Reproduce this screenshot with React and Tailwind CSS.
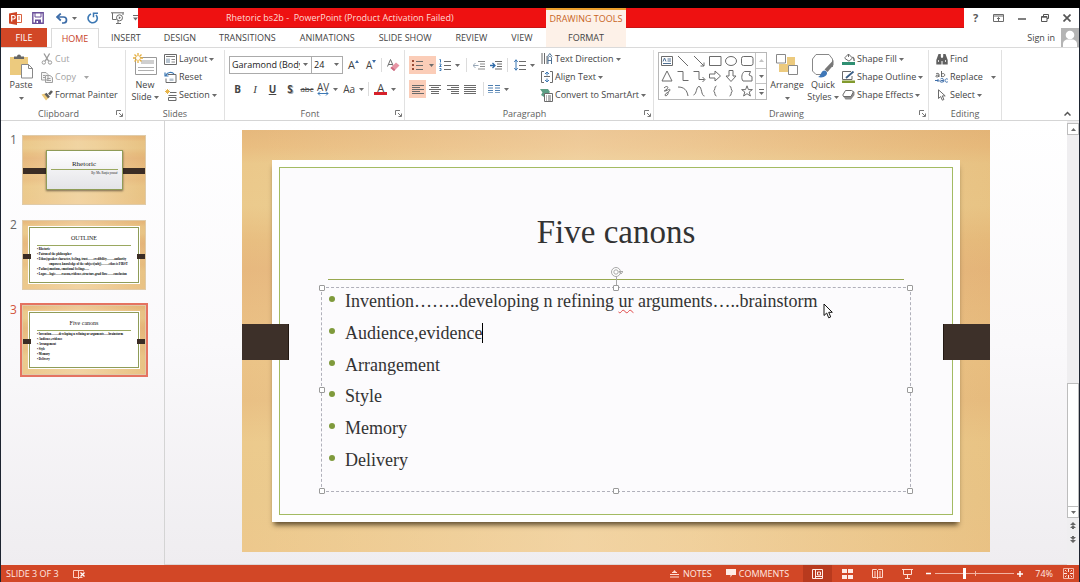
import React from "react";

const WOOD =
  "bg-[linear-gradient(90deg,rgba(255,255,255,0)_0%,rgba(255,240,220,0.28)_45%,rgba(255,240,220,0.2)_60%,rgba(214,160,90,0.16)_100%),linear-gradient(180deg,#e6b87c_0%,#e9bd80_4%,#ebc88a_8%,#ebca8c_18%,#e8be80_26%,#e7b87e_33%,#e9bd82_42%,#ebc386_55%,#e9c084_64%,#ecca8c_74%,#ebc98c_88%,#edc88c_100%)]";

function Icon({ w, h, children, className = "" }) {
  return (
    <svg
      width={w}
      height={h}
      viewBox={`0 0 ${w} ${h}`}
      fill="none"
      stroke="#6b6b6b"
      aria-hidden="true"
      className={`block shrink-0 ${className}`}
    >
      {children}
    </svg>
  );
}

function Caret({ className = "" }) {
  return (
    <svg width="5" height="3" viewBox="0 0 5 3" aria-hidden="true" className={`block shrink-0 fill-[#6b6b6b] ${className}`}>
      <path d="M0 0h5L2.5 3z" />
    </svg>
  );
}

function Row({ icon, label, caret, muted, caretGap = "ml-0.5" }) {
  return (
    <button
      type="button"
      className={`flex h-[18px] items-center whitespace-nowrap ${muted ? "text-[#a3a3a3]" : "text-[#444]"}`}
    >
      <span className="mr-0.5 flex w-[13px] shrink-0 justify-center">{icon}</span>
      {label}
      {caret && <Caret className={caretGap} />}
    </button>
  );
}

function Tool({ label, className = "", children }) {
  return (
    <button type="button" aria-label={label} className={`flex h-[18px] shrink-0 items-center justify-center ${className}`}>
      {children}
    </button>
  );
}

function Group({ title, className = "", launcher, children }) {
  return (
    <section aria-label={title} className={`flex shrink-0 flex-col border-r border-[#e1e1e1] ${className}`}>
      <div className="flex h-[57px] shrink-0 items-start">{children}</div>
      <div className="flex h-[13px] items-center">
        <span className="flex-1 text-center text-[#5e5e5e]">{title}</span>
        {launcher && (
          <button type="button" aria-label={`${title} settings`} className="mr-0.5">
            <Icon w={7} h={7}>
              <path d="M.5 5V.5H5M3 3l3 3M6.5 3.5v3h-3" stroke="#777" />
            </Icon>
          </button>
        )}
      </div>
    </section>
  );
}

const VRule = ({ className = "" }) => <span className={`h-[14px] w-px shrink-0 bg-[#dcdcdc] ${className}`} />;

/* ---------- ribbon icons ---------- */
const CutIcon = (
  <Icon w={12} h={12} >
    <g stroke="#9a9a9a">
      <path d="M3 .5l4.6 7.6M8.6.5L4.2 8.1" strokeWidth="1.3" />
      <circle cx="2.8" cy="9.5" r="1.7" />
      <circle cx="9" cy="9.5" r="1.7" />
    </g>
  </Icon>
);
const CopyIcon = (
  <Icon w={12} h={11}>
    <g stroke="#a0a0a0" fill="#f4f4f4">
      <path d="M.5.5h4.5l2 2v5.500h-6.500zM4.500 3.500h4.500l2.500 2v5h-7z" />
      <path d="M2 3.500h2M2 5.500h2M6 6.500h3.500M6 8.500h4" />
    </g>
  </Icon>
);
const PainterIcon = (
  <Icon w={12} h={11}>
    <path d="M.5 4.500L4 3.500l4 4-3 3z" fill="#ecc878" stroke="none" />
    <path d="M4.500 3.500l3.500 4M8 4.500L11 1" stroke="#5d5d5d" strokeWidth="2.600" />
  </Icon>
);
const LayoutIcon = (
  <Icon w={13} h={11}>
    <path d="M.5.5h12v10H.5z" fill="#fff" />
    <path d="M2 2.500h9" stroke="#777" />
    <path d="M2 4.500h4v4.500H2z" fill="#b7c4d0" stroke="none" />
    <path d="M7.500 5.500h3.500M7.500 8h3.500" stroke="#8a8a8a" />
  </Icon>
);
const ResetIcon = (
  <Icon w={13} h={12}>
    <path d="M3.500 3.500h8.500v8h-10v-4" fill="#fff" />
    <path d="M5.500 7.500h4v2.500h-4z" fill="#b7c4d0" stroke="none" />
    <path d="M2 4.500C3 1 8 .5 10 3M1 1.500v3.500h3.500" stroke="#3c78b4" strokeWidth="1.200" />
  </Icon>
);
const SectionIcon = (
  <Icon w={13} h={12}>
    <path d="M3.500 0v5M1 2.500h5M1.800.8l3.400 3.400M5.200.8L1.800 4.200" stroke="#e8b64c" />
    <path d="M6 3.500h6.500M4.500 6.500h8M4.500 8.500h7.500v3h-7.500z" />
  </Icon>
);
const TextDirIcon = (
  <Icon w={12} h={12}>
    <path d="M1 0v11M3.500 0v11M6 3v8" />
    <path d="M7 11V5c0-2 3.500-2 3.500 0v6M7 7.500h3.500" stroke="#4f7396" />
    <path d="M6.500 3.500l2.300-3 2.300 3" stroke="#4f7396" />
  </Icon>
);
const AlignTextIcon = (
  <Icon w={12} h={12}>
    <path d="M3 .5H.5v11H3M9 .5h2.500v11H9" />
    <path d="M6 1v3.500M4 3l2-2 2 2M6 11V7.500M4 9l2 2 2-2" stroke="#3c78b4" />
    <path d="M3 5.500h6" />
  </Icon>
);
const SmartArtIcon = (
  <Icon w={13} h={13}>
    <path d="M0 0h8l2 3-2 2H4v3L1 6l1.500-2.500z" fill="#5c9e84" stroke="none" />
    <path d="M4.500 4.500h8v8h-8z" fill="#fff" />
    <path d="M6 7h1M8 7h3M6 9h1M8 9h3M6 11h1M8 11h3" />
  </Icon>
);
const FillIcon = (
  <Icon w={13} h={12}>
    <path d="M3 4.500L6.500 1l4 4L7 8.200 3 5.500zM6.500 1V4" fill="#fff" />
    <path d="M10.500 4c1.500 1 1.800 2.500 1.500 4" strokeWidth="1.400" />
    <path d="M0 9h13v3H0z" fill="#2f8f72" stroke="none" />
  </Icon>
);
const OutlineIcon = (
  <Icon w={13} h={12}>
    <path d="M9 .5H.5v8h9.500V5" fill="#fff" />
    <path d="M4 7l7.500-6.500" stroke="#3b5f86" strokeWidth="1.800" />
    <path d="M0 9.500h13V12H0z" fill="#829a2e" stroke="none" />
  </Icon>
);
const EffectsIcon = (
  <Icon w={13} h={10}>
    <path d="M1 6l2.500 3.500h5.500L12.500 5V2L9 .5z" fill="#8d8d8d" stroke="none" />
    <path d="M3.500.5h6l2 1.200-2.500 4.800H1.500L.8 5z" fill="#fff" />
  </Icon>
);
const FindIcon = (
  <Icon w={12} h={11}>
    <path d="M2.500 0h2.300v2.500L5.500 4v6.500H.3V6zM9.500 0H7.200v2.500L6.500 4v6.500h5.200V6z" fill="#606060" stroke="none" />
    <path d="M5 4h2v3H5z" fill="#606060" stroke="none" />
    <path d="M2.500 6v2M9.500 6v2" stroke="#ddd" />
  </Icon>
);
const ReplaceIcon = (
  <Icon w={13} h={12}>
    <path d="M1 3c1-1 3-.8 3 .5V6M4 4.200C2 4 .8 4.500.8 5.300S3 6.200 4 5.200M6.500 0v6M6.500 4c0-2 3.200-2 3.200 0s-3.200 2-3.200.3" stroke="#666" />
    <path d="M5.500 8c1-1 2.800-.8 2.800.5V11.200M8.300 9.500c-2-.2-3.200.2-3.200 1s2.200 1 3.200 0M12.800 8.200c-1.500-1-2.800 0-2.800 1.300s1.300 2.300 2.800 1.300" stroke="#3c6ca8" />
    <path d="M0 9.500h3.500M2.500 8L4 9.500 2.500 11" stroke="#3c6ca8" />
  </Icon>
);
const SelectIcon = (
  <Icon w={9} h={12}>
    <path d="M1.500.8v8.700l2.200-2 1.600 3.700 1.600-.7-1.600-3.600h2.900z" fill="#fff" />
  </Icon>
);

function Lines({ xs, color = "#6b6b6b" }) {
  return (
    <Icon w={12} h={9}>
      {xs.map(([a, b], i) => (
        <path key={i} d={`M${a} ${i * 2 + 0.5}H${b}`} stroke={color} />
      ))}
    </Icon>
  );
}

/* ---------- title bar and tabs ---------- */
function TitleBar() {
  return (
    <header className="flex h-5 shrink-0 items-stretch bg-white">
      <div className="flex w-[137px] shrink-0 items-center pl-2">
        <Icon w={13} h={13}>
          <path d="M0 1.500L8 0v13L0 11.500z" fill="#cf4526" stroke="none" />
          <path d="M2.700 9.500v-6h1.800a1.600 1.600 0 010 3.500H2.700" stroke="#fff" strokeWidth="1.200" />
          <path d="M8 2.500h4.500v8H8M9 5h2M9 7h2" stroke="#d9603f" />
        </Icon>
        <Tool label="Save" className="ml-2.5">
          <Icon w={12} h={12}>
            <path d="M.8.8h10.400v10.400H.8z" stroke="#6a4f9a" strokeWidth="1.400" />
            <path d="M3 1v4h6V1" stroke="#6a4f9a" />
            <path d="M3 7.500h6V12H3z" fill="#6a4f9a" stroke="none" />
            <path d="M4.500 9h1.500v2H4.500z" fill="#fff" stroke="none" />
          </Icon>
        </Tool>
        <Tool label="Undo" className="ml-3">
          <Icon w={12} h={11}>
            <path d="M1.500 4h6c4 0 4 6 0 6H6" stroke="#3c6ca8" strokeWidth="1.700" />
            <path d="M4.800.5L1 4l3.800 3.500" stroke="#3c6ca8" strokeWidth="1.700" />
          </Icon>
          <Caret className="ml-1" />
        </Tool>
        <Tool label="Repeat" className="ml-2.5">
          <Icon w={12} h={12}>
            <path d="M9 3A4.600 4.600 0 1 1 4 1.900" stroke="#3c78b4" strokeWidth="1.600" />
            <path d="M6.500 5.200V1.200h4.500" stroke="#3c78b4" strokeWidth="1.500" />
          </Icon>
        </Tool>
        <Tool label="Start from beginning" className="ml-3">
          <Icon w={14} h={12}>
            <path d="M0 .8h13M1.500 1v6.500h4M12 1v2M5 11.500h5M7 8v3" />
            <circle cx="8.500" cy="5.800" r="3" fill="#fff" />
            <path d="M7.800 4.300l2.200 1.500-2.200 1.500z" fill="#6b6b6b" stroke="none" />
          </Icon>
        </Tool>
        <Tool label="Customize toolbar" className="ml-2">
          <Icon w={5} h={6}>
            <path d="M0 .5h5" />
            <path d="M0 2.500h5L2.500 5.500z" fill="#6b6b6b" stroke="none" />
          </Icon>
        </Tool>
      </div>
      <div className="flex flex-1 border-b border-[#c81414] bg-[#ee1111]">
        <h1 className="flex w-[408px] items-center whitespace-pre pl-[88px] text-[#ffdcd6]">
          Rhetoric bs2b -&nbsp; PowerPoint (Product Activation Failed)
        </h1>
        <div className="-mb-px flex w-20 items-center justify-center whitespace-nowrap border-t-2 border-[#eca02c] bg-[#fdf1e8] text-[#c8641e]">
          DRAWING TOOLS
        </div>
      </div>
      <div className="flex w-[115px] shrink-0 items-center justify-between pr-2 pl-[9px]">
        <button type="button" aria-label="Help" className="text-[11px] font-bold text-[#5a5a5a]">?</button>
        <button type="button" aria-label="Ribbon display options">
          <Icon w={11} h={8}>
            <path d="M.5.5h10v7H.5zM.5 2h10M5.500 7V3.500M4 5l1.500-1.500L7 5" />
          </Icon>
        </button>
        <button type="button" aria-label="Minimize">
          <Icon w={8} h={8}><path d="M0 5h8" stroke="#555" strokeWidth="1.500" /></Icon>
        </button>
        <button type="button" aria-label="Restore">
          <Icon w={8} h={8}><path d="M2.500 2V.5h5v4H6M.5 2.500H6v5H.5zM.5 3.200H6" stroke="#555" /></Icon>
        </button>
        <button type="button" aria-label="Close">
          <Icon w={8} h={8}><path d="M.5.5l7 7M7.500.5l-7 7" stroke="#555" strokeWidth="1.700" /></Icon>
        </button>
      </div>
    </header>
  );
}

const TABS = [
  ["INSERT", "ml-3"],
  ["DESIGN", "ml-[23px]"],
  ["TRANSITIONS", "ml-[23px]"],
  ["ANIMATIONS", "ml-6"],
  ["SLIDE SHOW", "ml-6"],
  ["REVIEW", "ml-6"],
  ["VIEW", "ml-6"],
];

function Tabs() {
  return (
    <nav className="flex h-5 shrink-0 items-stretch border-b border-[#dadada] bg-white">
      <button type="button" className="mr-1 w-[46px] bg-[#d24726] text-white">FILE</button>
      <button type="button" className="-mb-px w-12 border border-b-0 border-[#dadada] bg-white text-[#c8432a]">HOME</button>
      <div className="flex w-[447px] whitespace-nowrap">
        {TABS.map(([t, gap]) => (
          <button key={t} type="button" className={gap}>{t}</button>
        ))}
      </div>
      <button type="button" className="w-20 bg-[#fdf1e8]">FORMAT</button>
      <div className="ml-auto flex items-center gap-[6px]">
        <a href="#signin">Sign in</a>
        <svg width="18" height="19" viewBox="0 0 18 19" role="img" aria-label="Account picture" className="block">
          <path d="M0 0h18v19H0z" fill="#b4b4b4" />
          <circle cx="9" cy="7" r="4.300" fill="#fff" />
          <path d="M2 19v-3c0-3 2.500-4.500 4.500-4.500h5c2 0 4.500 1.500 4.500 4.500v3z" fill="#fff" />
        </svg>
      </div>
    </nav>
  );
}

/* ---------- shape gallery ---------- */
const SHAPES = [
  ["Text box", <><path d="M.5 1.500h11v9H.5z" /><path d="M2 6.500l1.500-3.500L5 6.500M6.500 4H10M6.500 6H10M2 8.500h8" stroke="#4f6f92" /></>],
  ["Line", <path d="M1 1l10 10" />],
  ["Arrow", <><path d="M1 1l10 10" /><path d="M11 7.500V11H7.500" /></>],
  ["Rectangle", <path d="M.5 1.500h11.500v9H.5z" />],
  ["Oval", <ellipse cx="6" cy="6" rx="5.500" ry="4.500" />],
  ["Rounded rectangle", <rect x=".5" y="1.500" width="11.500" height="9" rx="2" />],
  ["Triangle", <path d="M6 1l5 10H1z" />],
  ["Elbow connector", <path d="M.5 1.500h5.500v9h5.500" />],
  ["Elbow arrow", <><path d="M.5 1.500h5.500v8h5.500" /><path d="M9.500 7l2.500 2.500L9.500 12" /></>],
  ["Right arrow", <path d="M.5 4h5.500V1l5.500 5L6 11V8H.5z" />],
  ["Down arrow", <path d="M4 .5v5.500H1l5 5.500L11 6H8V.5z" />],
  ["Freeform", <path d="M3.500 1.500h6L8 5l3 1.500v4.500H2c-2-2-1.500-8 1.500-9.500z" />],
  ["Scribble", <path d="M3 3c3-3 5-1 3 1S2 6 4 6s5-3 5-1-5 3-5 5 4 0 3-3" />],
  ["Arc", <path d="M1 2c6 0 9 3 10 9" />],
  ["Curve", <path d="M.5 10C4 9 3 1.500 6 1.500S8 11 11.500 11" />],
  ["Left brace", <path d="M7.500 1C5 1 6.500 6 4.500 6c2 0 .5 5 3 5" />],
  ["Right brace", <path d="M4.500 1c2.500 0 1 5 3 5-2 0-.5 5-3 5" />],
  ["Star", <path d="M6 .8l1.400 3.800h4L8.200 7l1.200 4L6 8.700 2.600 11l1.200-4L.6 4.600h4z" />],
];

function Ribbon() {
  return (
    <div className="flex h-[73px] shrink-0 border-b border-[#d5d5d5] bg-white pt-[2px] text-[#444]">
      <Group title="Clipboard" launcher className="w-[125px]">
        <button type="button" className="ml-2 flex w-6 flex-col items-center pt-1">
          <Icon w={24} h={25}>
            <path d="M1 3h18v18H1z" fill="#ecca7e" stroke="none" />
            <path d="M5 5V2.500h3a2 2 0 014 0h3V5z" fill="#666" stroke="none" />
            <path d="M12.500 10.500h7l4 4v9.500h-11z" fill="#fff" stroke="#888" />
            <path d="M19.500 10.500v4h4" stroke="#888" />
          </Icon>
          <span className="leading-3">Paste</span>
          <Caret className="mt-1.5" />
        </button>
        <div className="ml-[7px]">
          <Row icon={CutIcon} label="Cut" muted />
          <Row icon={CopyIcon} label="Copy" muted caret caretGap="ml-2 opacity-60" />
          <Row icon={PainterIcon} label="Format Painter" />
        </div>
      </Group>

      <Group title="Slides" className="w-[99px]">
        <button type="button" className="ml-[5px] flex w-7 flex-col items-center pt-[3px]">
          <Icon w={24} h={22}>
            <path d="M2.500 4.500h21v17h-21z" fill="#fff" stroke="#999" />
            <path d="M8 7h13v4H8z" fill="#cfcfcf" stroke="none" />
            <path d="M5 14.500h16M5 17.500h16" stroke="#b0b0b0" />
            <path d="M5 0v10M0 5h10M1.500 1.500l7 7M8.500 1.500l-7 7" stroke="#e6b040" strokeWidth="1.300" />
            <circle cx="5" cy="5" r="2" fill="#fff" stroke="none" />
          </Icon>
          <span className="mt-1 leading-3">New</span>
          <span className="flex items-center whitespace-nowrap leading-3">Slide<Caret className="ml-0.5" /></span>
        </button>
        <div className="ml-[5px]">
          <Row icon={LayoutIcon} label="Layout" caret />
          <Row icon={ResetIcon} label="Reset" />
          <Row icon={SectionIcon} label="Section" caret />
        </div>
      </Group>

      <Group title="Font" launcher className="w-[180px]">
        <div className="pl-1">
          <div className="mt-1.5 flex h-[18px] items-center">
            <span className="relative block h-[18px] w-[83px] border border-[#ababab]">
              <select aria-label="Font name" className="block h-4 w-[70px] appearance-none overflow-hidden bg-white pl-0.5 text-[#222] outline-none">
                <option>Garamond (Body)</option>
              </select>
              <Caret className="absolute top-1.5 right-[3px]" />
            </span>
            <span className="relative -ml-px block h-[18px] w-8 border border-[#ababab]">
              <select aria-label="Font size" className="block h-4 w-full appearance-none bg-white pl-0.5 text-[#222] outline-none">
                <option>24</option>
              </select>
              <Caret className="absolute top-1.5 right-[3px]" />
            </span>
            <Tool label="Increase font size" className="ml-[5px] text-[11px]">A
              <Icon w={4} h={3} className="mb-2"><path d="M0 3h4L2 0z" fill="#3c6ca8" stroke="none" /></Icon>
            </Tool>
            <Tool label="Decrease font size" className="ml-[7px] text-[10px]">A
              <Icon w={4} h={3} className="mb-2"><path d="M0 0h4L2 3z" fill="#3c6ca8" stroke="none" /></Icon>
            </Tool>
            <VRule className="ml-[5px]" />
            <Tool label="Clear formatting" className="ml-[5px]">
              <Icon w={13} h={13}>
                <path d="M.5 7.500L3.500.5l3 7M1.500 5.500h4" />
                <path d="M3.500 9L9 3.500l3.500 3L7 12z" fill="#e794a4" stroke="none" />
                <path d="M3.500 9l1.300-1.200 3.500 3L7 12z" fill="#c96a80" stroke="none" />
              </Icon>
            </Tool>
          </div>
          <div className="mt-1.5 flex h-[18px] items-center text-[10px]">
            <Tool label="Bold" className="w-[17px] font-bold">B</Tool>
            <Tool label="Italic" className="w-[18px] font-[Liberation_Serif] text-[11px] italic">I</Tool>
            <Tool label="Underline" className="w-[17px] font-bold underline">U</Tool>
            <Tool label="Text shadow" className="w-[18px] font-bold text-shadow-[1px_1px_0_#aaa]">S</Tool>
            <Tool label="Strikethrough" className="w-4 text-[8px] line-through">abc</Tool>
            <Tool label="Character spacing" className="ml-0.5 gap-1">
              <span className="flex flex-col items-center leading-[8px]">AV
                <Icon w={12} h={5}><path d="M1 2.500h10M3 .5l-2 2 2 2M9 .5l2 2-2 2" stroke="#3c78b4" /></Icon>
              </span>
              <Caret />
            </Tool>
            <Tool label="Change case" className="ml-[5px] gap-1">Aa<Caret /></Tool>
            <VRule className="ml-1" />
            <Tool label="Font colour" className="ml-[5px] gap-1">
              <span className="flex w-[13px] flex-col items-center text-[11px] leading-[9px]">A
                <span className="h-[3px] w-full bg-[#d6202a]" />
              </span>
              <Caret />
            </Tool>
          </div>
        </div>
      </Group>

      <Group title="Paragraph" launcher className="w-[249px]">
        <div className="w-[131px] pl-1">
          <div className="mt-1.5 flex h-[18px] items-center">
            <Tool label="Bullets" className="w-[27px] gap-1.5 bg-[#fbcdb8]">
              <Icon w={11} h={12}>
                <path d="M4 2.500h7M4 6.500h7M4 10.500h7" />
                <path d="M0 1h2v2H0zM0 5h2v2H0zM0 9h2v2H0z" fill="#9a4a34" stroke="none" />
              </Icon>
              <Caret />
            </Tool>
            <Tool label="Numbering" className="ml-[3px] gap-1">
              <Icon w={12} h={12}>
                <path d="M5 2.500h7M5 6.500h7M5 10.500h7" />
                <path d="M.5.5h1v3M.5 5h1.500v1L.5 7.500H2.500M.5 9.500H2V11.500H.5" stroke="#3c78b4" />
              </Icon>
              <Caret />
            </Tool>
            <VRule className="ml-1.5" />
            <Tool label="Decrease indent" className="ml-1.5">
              <Icon w={12} h={9}>
                <path d="M5 .5h7M7 3h5M7 5.500h5M5 8h7" stroke="#8a8a8a" />
                <path d="M0 4.500h5.500M2.500 2L0 4.500 2.500 7" stroke="#9aa9b8" />
              </Icon>
            </Tool>
            <Tool label="Increase indent" className="ml-[5px]">
              <Icon w={12} h={9}>
                <path d="M5 .5h7M7 3h5M7 5.500h5M5 8h7" />
                <path d="M0 4.500h5M2.500 2L5 4.500 2.500 7" stroke="#2f6aa8" strokeWidth="1.300" />
              </Icon>
            </Tool>
            <VRule className="ml-[5px]" />
            <Tool label="Line spacing" className="ml-1.5 gap-1">
              <Icon w={12} h={12}>
                <path d="M5 2.500h7M5 6.500h7M5 10.500h7" />
                <path d="M2 .8v10.400M.3 3L2 .8 3.700 3M.3 9L2 11.200 3.700 9" stroke="#3c78b4" />
              </Icon>
              <Caret />
            </Tool>
          </div>
          <div className="mt-1.5 flex h-[18px] items-center">
            <Tool label="Align left" className="w-[17px] bg-[#fbcdb8]"><Lines xs={[[0, 12], [0, 8], [0, 12], [0, 8], [0, 12]]} /></Tool>
            <Tool label="Centre" className="w-[18px]"><Lines xs={[[0, 12], [2, 10], [0, 12], [2, 10], [2, 10]]} /></Tool>
            <Tool label="Align right" className="w-[17px]"><Lines xs={[[0, 12], [4, 12], [0, 12], [4, 12], [4, 12]]} /></Tool>
            <Tool label="Justify" className="w-[18px]"><Lines xs={[[0, 12], [0, 12], [0, 12], [0, 12], [0, 12]]} /></Tool>
            <VRule className="ml-1" />
            <Tool label="Columns" className="ml-1 gap-1">
              <Icon w={12} h={8}>
                <path d="M0 .5h5M0 3h5M0 5.500h5M0 7.800h5M7 .5h5M7 3h5M7 5.500h5M7 7.800h5" stroke="#4f7fb0" />
              </Icon>
              <Caret />
            </Tool>
          </div>
        </div>
        <div className="ml-1">
          <Row icon={TextDirIcon} label="Text Direction" caret />
          <Row icon={AlignTextIcon} label="Align Text" caret />
          <Row icon={SmartArtIcon} label="Convert to SmartArt" caret />
        </div>
      </Group>

      <Group title="Drawing" launcher className="w-[275px]">
        <div className="mt-0.5 ml-1 flex h-12 w-[109px] border border-[#b8b8b8]">
          <div className="grid flex-1 grid-cols-6 grid-rows-3 place-items-center">
            {SHAPES.map(([name, art]) => (
              <button key={name} type="button" aria-label={name}>
                <Icon w={13} h={12}>{art}</Icon>
              </button>
            ))}
          </div>
          <div className="flex w-[11px] flex-col divide-y divide-[#c4c4c4] border-l border-[#c4c4c4]">
            <button type="button" aria-label="Scroll shapes up" className="flex flex-1 items-center justify-center"><Caret className="rotate-180 opacity-40" /></button>
            <button type="button" aria-label="Scroll shapes down" className="flex flex-1 items-center justify-center"><Caret /></button>
            <button type="button" aria-label="More shapes" className="flex flex-1 flex-col items-center justify-center gap-0.5"><span className="h-px w-[5px] bg-[#6b6b6b]" /><Caret /></button>
          </div>
        </div>
        <button type="button" className="ml-0.5 flex w-9 flex-col items-center pt-1">
          <Icon w={22} h={21}>
            <path d="M11 3h8v8h-8zM3 10h9v8H3z" fill="#ecca7e" stroke="none" />
            <path d="M.5.5h9v8.500h-9zM12.500 11.500h9v9h-9z" fill="#fff" stroke="#888" />
          </Icon>
          <span className="mt-1 leading-3">Arrange</span>
          <Caret className="mt-1.5" />
        </button>
        <button type="button" className="ml-0.5 flex w-8 flex-col items-center pt-1">
          <Icon w={24} h={24}>
            <path d="M14 20.500H5L1.500 17V5L5 .5h13L21.500 5v8" fill="#fff" stroke="#888" />
            <path d="M22.500 6v5l-6 7-3-2.500z" fill="#777" stroke="none" />
            <path d="M7 23c3-1 3-6 6-6.500 3 0 4 3 2 5s-5 2.500-8 1.500z" fill="#3f78b8" stroke="none" />
          </Icon>
          <span className="mt-px leading-3">Quick</span>
          <span className="flex items-center leading-3">Styles<Caret className="ml-0.5" /></span>
        </button>
        <div className="ml-[3px]">
          <Row icon={FillIcon} label="Shape Fill" caret />
          <Row icon={OutlineIcon} label="Shape Outline" caret />
          <Row icon={EffectsIcon} label="Shape Effects" caret />
        </div>
      </Group>

      <Group title="Editing" className="w-[73px]">
        <div className="ml-1.5">
          <Row icon={FindIcon} label="Find" />
          <Row icon={ReplaceIcon} label="Replace" caret caretGap="ml-2" />
          <Row icon={SelectIcon} label="Select" caret />
        </div>
      </Group>
      <button type="button" aria-label="Collapse the ribbon" className="mt-auto mr-2 mb-1 ml-auto">
        <Icon w={7} h={5}><path d="M.5 4.500l3-3 3 3" stroke="#555" strokeWidth="1.500" /></Icon>
      </button>
    </div>
  );
}

/* ---------- thumbnails ---------- */
const CANONS = ["Audience,evidence", "Arrangement", "Style", "Memory", "Delivery"];
const FIRST_CANON = "Invention……..developing n refining ur arguments…..brainstorm";

function ThumbFrame({ title, children }) {
  return (
    <div className={`relative h-[70px] w-[124px] border border-[#e0cba8] p-1.5 ${WOOD}`}>
      <div className="flex h-full flex-col border border-[#8f9c58] bg-white px-[7px] text-left shadow-[0_0_0_1px_#fff]">
        <span className="mt-1 block text-center text-[6px] leading-3">{title}</span>
        <span className="mt-px h-px bg-[#9aa860]" />
        <div className="mt-px text-[3px] leading-[5px] font-bold text-black">{children}</div>
      </div>
      <span className="absolute top-[33px] left-0 h-[5px] w-2 bg-[#3b2d25]" />
      <span className="absolute top-[33px] right-0 h-[5px] w-2 bg-[#3b2d25]" />
    </div>
  );
}

function Thumb({ n, active, children }) {
  return (
    <li className="flex items-start">
      <span className={`w-[19px] shrink-0 pl-[9px] text-[12px] leading-[14px] ${active ? "text-[#d2553c]" : "text-[#666]"}`}>{n}</span>
      <button
        type="button"
        aria-label={`Slide ${n}`}
        className={`border-2 font-[Liberation_Serif] text-[#222] ${active ? "border-[#e57361]" : "border-transparent"}`}
      >
        {children}
      </button>
    </li>
  );
}

function Thumbnails() {
  return (
    <aside className="w-[164px] shrink-0 border-r border-[#d4d4d4] pt-3">
      <ol className="flex flex-col gap-[11px]">
        <Thumb n={1}>
          <div className={`relative flex h-[70px] w-[124px] items-center justify-center border border-[#e0cba8] ${WOOD}`}>
            <span className="absolute top-[32px] left-0 h-1.5 w-full bg-[#3b2d25]" />
            <div className="relative h-10 w-[77px] border border-[#8f9c58] bg-gradient-to-b from-white to-[#e4e4e8] px-1 shadow-[0_1px_2px_rgba(0,0,0,0.5)]">
              <span className="mt-2 block text-center text-[7px] leading-[10px]">Rhetoric</span>
              <span className="block h-px bg-[#9aa860]" />
              <span className="mt-0.5 block text-right text-[3px] leading-[3px]">By: Ms. Ruqia yousaf</span>
            </div>
          </div>
        </Thumb>
        <Thumb n={2}>
          <ThumbFrame title="OUTLINE">
            <div>• Rhetoric</div>
            <div>• Patron of the philosopher</div>
            <div>• Ethos(speaker character, feeling, trust……credibility……..authority</div>
            <div className="pl-3">empower, knowledge of the subject(subj)……..ethos is FIRST</div>
            <div>• Pathos(emotions, emotional feelings…..</div>
            <div>• Logos—logic……reason,evidence,structure,grad flow……conclusion</div>
          </ThumbFrame>
        </Thumb>
        <Thumb n={3} active>
          <ThumbFrame title="Five canons">
            <div>• {FIRST_CANON}</div>
            {CANONS.map((c) => (
              <div key={c}>• {c}</div>
            ))}
          </ThumbFrame>
        </Thumb>
      </ol>
    </aside>
  );
}

/* ---------- slide ---------- */
const HANDLES = [
  "-top-[3px] -left-[3px]",
  "-top-[3px] left-1/2 -ml-[3px]",
  "-top-[3px] -right-[3px]",
  "top-1/2 -mt-[3px] -left-[3px]",
  "top-1/2 -mt-[3px] -right-[3px]",
  "-bottom-[3px] -left-[3px]",
  "-bottom-[3px] left-1/2 -ml-[3px]",
  "-bottom-[3px] -right-[3px]",
];

function Bullet({ children }) {
  return (
    <li className="flex items-center whitespace-nowrap">
      <span className="mr-[10px] mb-1 size-[6px] shrink-0 rounded-full bg-[#7f9a3c]" />
      {children}
    </li>
  );
}

function Slide() {
  return (
    <article className={`relative flex min-h-[422px] w-full max-w-[748px] flex-col p-[30px] ${WOOD}`}>
      <div className="flex flex-1 flex-col bg-white p-[7px] shadow-[0_5px_5px_-2px_rgba(60,45,20,0.8)]">
        <div className="flex flex-1 flex-col border border-[#a3bb62] bg-[#fcfbfd] px-[41px] font-[Liberation_Serif] text-[#333]">
          <h2 className="mx-[7px] flex h-[112px] items-center justify-center border-b border-[#98a850] pt-4 text-[33px]">Five canons</h2>
          <div className="relative mt-[7px] flex h-[205px] flex-col border border-dashed border-[#b0b0ba] pt-[3px] pb-[21px] pl-[7px] text-[18px] leading-5">
            <ul className="flex flex-1 flex-col justify-between">
              <Bullet>
                <span>
                  Invention……..developing n refining{" "}
                  <span className="underline decoration-[#e04848] decoration-wavy decoration-1 underline-offset-2">ur</span>{" "}
                  arguments…..brainstorm
                </span>
              </Bullet>
              {CANONS.map((c, i) => (
                <Bullet key={c}>
                  {c}
                  {i === 0 && <span className="h-5 w-px bg-black" />}
                </Bullet>
              ))}
            </ul>
            {HANDLES.map((pos) => (
              <span key={pos} className={`absolute size-[6px] rounded-[1px] border border-[#9a9a9a] bg-white ${pos}`} />
            ))}
            <svg width="13" height="20" viewBox="0 0 13 20" fill="none" stroke="#a8a8a8" aria-hidden="true" className="absolute -top-[22px] left-1/2 -ml-[6px]">
              <circle cx="6" cy="6" r="4.500" fill="#fff" />
              <circle cx="6" cy="6" r="2.200" />
              <path d="M9 5.500h4l-2 2.500zM6.500 10.500V19" />
            </svg>
            <svg width="10" height="16" viewBox="0 0 10 16" aria-hidden="true" className="absolute top-[15px] right-[77px]">
              <path d="M1 1v11.500l2.700-2.500 2 4.800 2-.9-2-4.600H9.300z" fill="#fff" stroke="#111" />
            </svg>
          </div>
        </div>
      </div>
      <span className="absolute top-[194px] left-0 h-[36px] w-[47px] border-r border-[#221812] bg-[#3d3029]" />
      <span className="absolute top-[194px] right-0 h-[36px] w-[47px] border-l border-[#221812] bg-[#3d3029]" />
    </article>
  );
}

function ScrollBar() {
  return (
    <div className="flex w-3 shrink-0 flex-col items-center bg-[#efeef0] pt-0.5 pb-5">
      <button type="button" aria-label="Scroll up" className="flex h-3 w-3 items-center justify-center border border-[#bdbdbd] bg-white"><Caret className="rotate-180" /></button>
      <div className="flex w-full flex-1 flex-col justify-end">
        <div className="h-[124px] border border-[#bdbdbd] bg-white" />
      </div>
      <button type="button" aria-label="Scroll down" className="-mt-px flex h-3 w-3 items-center justify-center border border-[#bdbdbd] bg-white"><Caret /></button>
      <button type="button" aria-label="Previous slide" className="mt-px flex h-3 items-center">
        <Icon w={6} h={7}><path d="M0 3h6L3 0zM0 6h6L3 3zM2 6h2v1H2z" fill="#666" stroke="none" /></Icon>
      </button>
      <button type="button" aria-label="Next slide" className="mt-0.5 flex h-3 items-center">
        <Icon w={6} h={7}><path d="M0 4h6L3 7zM0 1h6L3 4zM2 0h2v1H2z" fill="#666" stroke="none" /></Icon>
      </button>
    </div>
  );
}

function StatusBar() {
  return (
    <footer className="flex h-[17px] shrink-0 items-center bg-[#d24726] text-[#ffe9e2]">
      <span className="pl-[5px]">SLIDE 3 OF 3</span>
      <button type="button" aria-label="Spelling" className="ml-3.5">
        <Icon w={12} h={10}>
          <path d="M5.500 1.500H.5v7h5zM5.500 1.500h5v1M5.500 8.500h4M5.500 1v9" stroke="#ffd0c2" />
          <path d="M7.500 3.500l4 4M11.500 3.500l-4 4" stroke="#fff" strokeWidth="1.300" />
        </Icon>
      </button>
      <div className="ml-auto flex h-full items-center">
        <button type="button" className="flex items-center gap-1">
          <Icon w={9} h={8}><path d="M0 4.500h9M0 7h9M2 2.500h5" stroke="#ffe0d6" /><path d="M2.500 2.500h4L4.500 0z" fill="#ffe0d6" stroke="none" /></Icon>
          NOTES
        </button>
        <button type="button" className="ml-3.5 flex items-center gap-[3px]">
          <Icon w={10} h={9}><path d="M0 0h10v6H6L4.500 8.500V6H0z" fill="#ffece6" stroke="none" /></Icon>
          COMMENTS
        </button>
        <button type="button" aria-label="Normal view" className="ml-3.5 flex h-full w-[29px] items-center justify-center bg-[#b83a1e]">
          <Icon w={11} h={10}><path d="M.5.5h10v9H.5zM3.500.5v9M5.500 3h3v3h-3zM3.500 7.500h7" stroke="#ffece6" /></Icon>
        </button>
        <button type="button" aria-label="Slide sorter" className="ml-[10px]">
          <Icon w={11} h={10}><path d="M0 0h5v4H0zM6 0h5v4H6zM0 6h5v4H0zM6 6h5v4H6z" fill="#ffece6" stroke="none" /></Icon>
        </button>
        <button type="button" aria-label="Reading view" className="ml-[19px]">
          <Icon w={11} h={10}><path d="M.5.5h4l1 1 1-1h4v8h-4l-1 1-1-1h-4zM5.500 1.500v8M2 3h2M2 5h2M2 7h2M7 3h2M7 5h2M7 7h2" stroke="#ffd9cc" /></Icon>
        </button>
        <button type="button" aria-label="Slide show" className="ml-[19px]">
          <Icon w={11} h={10}><path d="M0 .5h11M1.500.5v5h8v-5M5.500 6v3M3 9.500h5" stroke="#ffe0d6" /></Icon>
        </button>
        <button type="button" aria-label="Zoom out" className="ml-[13px]">
          <Icon w={5} h={5}><path d="M0 2.500h5" stroke="#fff" strokeWidth="1.500" /></Icon>
        </button>
        <span className="relative ml-1 flex h-full w-[79px] items-center">
          <input
            type="range"
            aria-label="Zoom"
            min="0"
            max="100"
            defaultValue="36"
            className="h-[11px] w-full appearance-none bg-[linear-gradient(#f2b3a2,#f2b3a2)] bg-[length:100%_1px] bg-center bg-no-repeat [&::-webkit-slider-thumb]:h-[11px] [&::-webkit-slider-thumb]:w-[3px] [&::-webkit-slider-thumb]:appearance-none [&::-webkit-slider-thumb]:bg-white"
          />
          <span className="absolute top-1.5 left-1/2 h-[5px] w-px bg-[#f2b3a2]" />
        </span>
        <button type="button" aria-label="Zoom in" className="ml-[3px]">
          <Icon w={6} h={6}><path d="M0 3h6M3 0v6" stroke="#fff" strokeWidth="1.500" /></Icon>
        </button>
        <span className="ml-3">74%</span>
        <button type="button" aria-label="Fit slide to window" className="mr-[5px] ml-2.5">
          <Icon w={11} h={11}>
            <path d="M.5.500h10v10H.5z" stroke="#f4b8a8" />
            <path d="M5.500 1v3M5.500 7v3M1 5.500h3M7 5.500h3M2 2l1.500 1.500M9 2L7.500 3.500M2 9l1.500-1.500M9 9L7.500 7.500" stroke="#ffe9e2" />
          </Icon>
        </button>
      </div>
    </footer>
  );
}

export default function App() {
  return (
    <div className="flex min-h-screen flex-col border-x border-[#1d2430] bg-white font-['Open_Sans','Noto_Sans',sans-serif] text-[9px] leading-3 text-[#444]">
      <div className="-mx-px h-2 shrink-0 bg-black" />
      <TitleBar />
      <Tabs />
      <Ribbon />
      <main className="flex flex-1 bg-gradient-to-b from-white via-[#faf9fb] to-[#efedf0]">
        <Thumbnails />
        <div className="flex min-w-0 flex-1 justify-center border-b border-[#dcd6d6] pt-[9px] pb-3">
          <Slide />
        </div>
        <ScrollBar />
      </main>
      <StatusBar />
    </div>
  );
}
